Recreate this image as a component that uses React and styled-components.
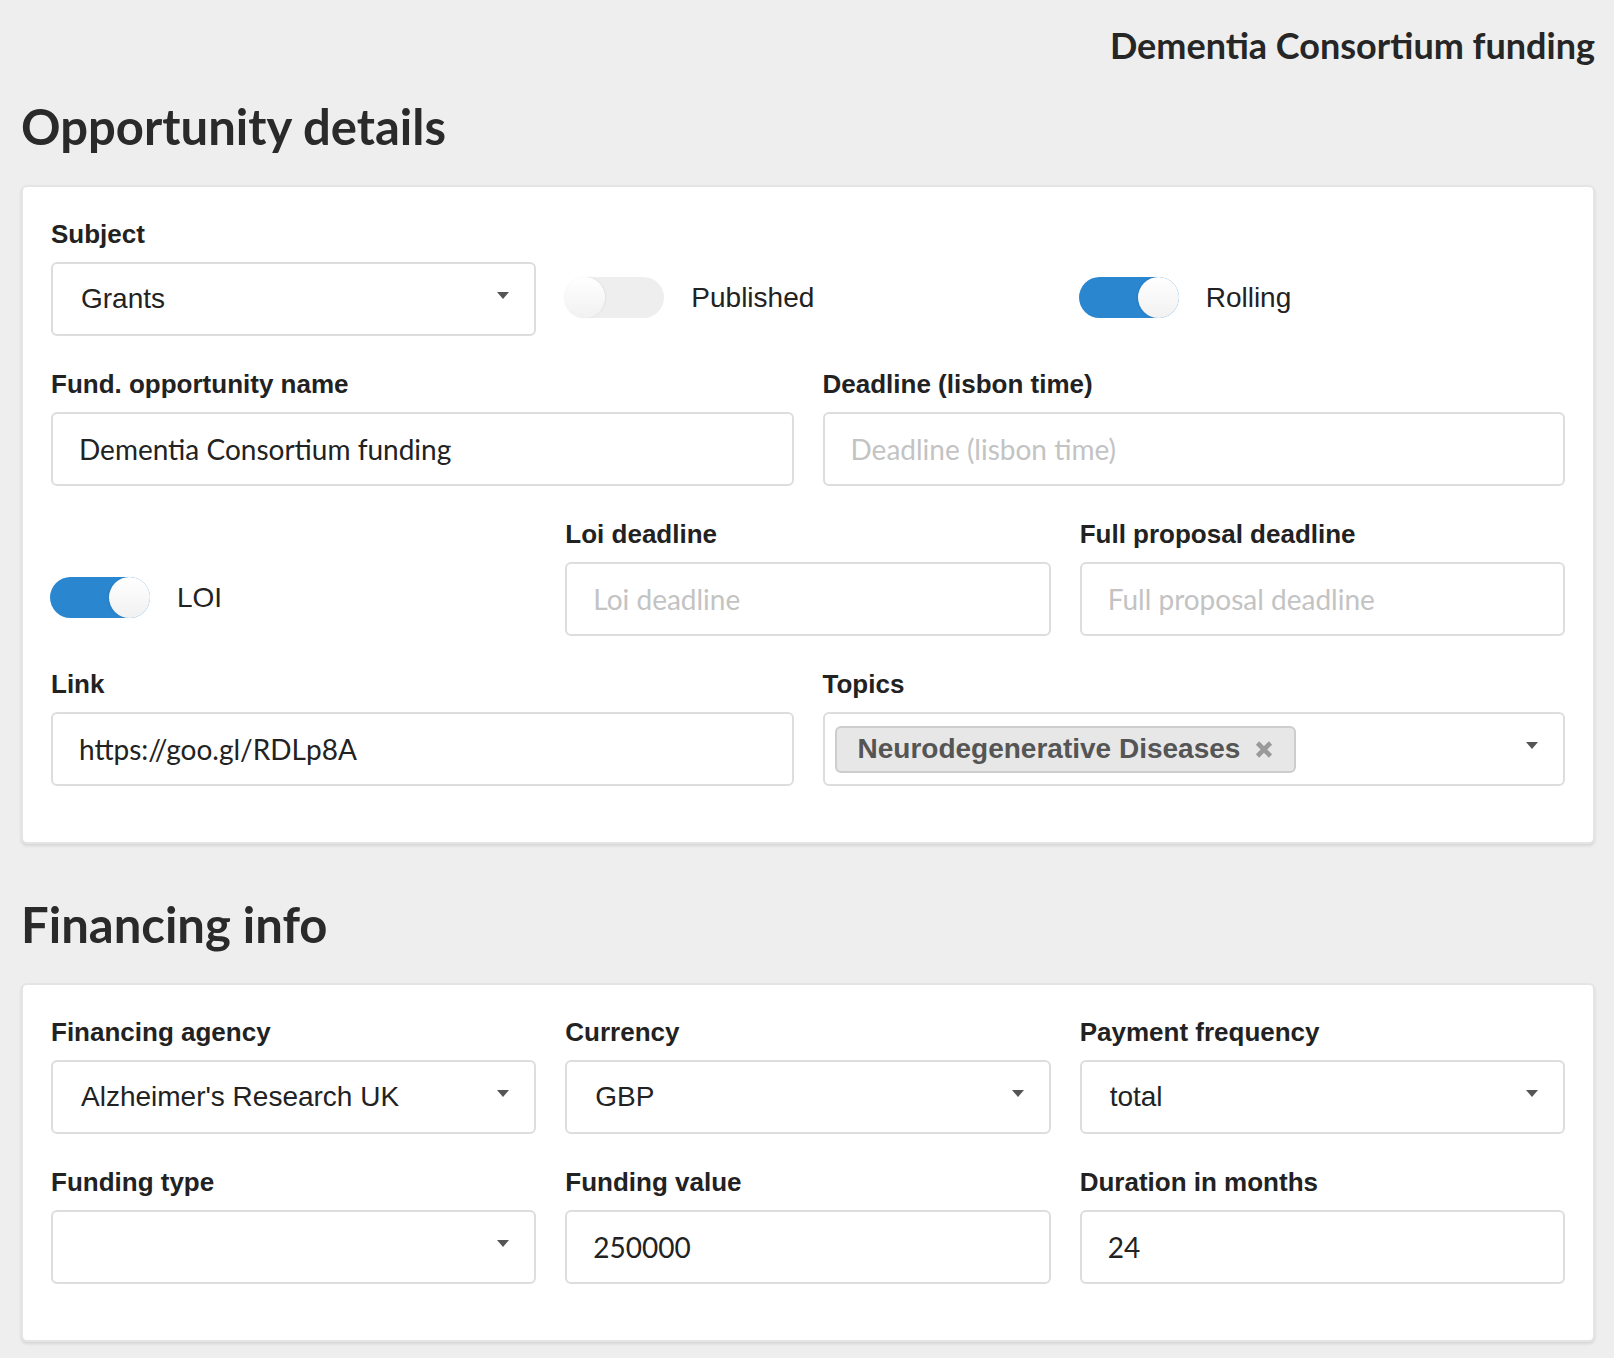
import React from "react";
import styled, { createGlobalStyle } from "styled-components";

const GlobalStyle = createGlobalStyle`
  * { box-sizing: border-box; }
  html, body { margin: 0; padding: 0; background: #eeeeee; }
  body { font-family: "Liberation Sans", Arial, sans-serif; color: #222; }
`;

const Page = styled.div`
  padding: 23px 19px 18px 21px;
`;

const TopTitle = styled.div`
  font-family: Lato, "Open Sans", sans-serif;
  font-weight: 700;
  font-size: 36px;
  line-height: 44px;
  text-align: right;
  color: #262626;
`;

const SectionTitle = styled.h2`
  margin: ${(p) => (p.$first ? "30px" : "51px")} 0 30px 0;
  font-family: Lato, "Open Sans", sans-serif;
  font-weight: 700;
  font-size: 49px;
  line-height: 58px;
  color: #2a2a2a;
`;

const Card = styled.section`
  background: #fff;
  border: 2px solid #e4e4e4;
  border-radius: 6px;
  box-shadow: 0 2px 3px rgba(0, 0, 0, 0.1);
  padding: 32px 28px 56px 28px;
`;

const Grid = styled.div`
  display: grid;
  grid-template-columns: repeat(6, minmax(0, 1fr));
  column-gap: 29px;
  row-gap: 33px;
`;

const Field = styled.div`
  grid-column: span ${(p) => p.$span};
  display: flex;
  flex-direction: column;
  min-width: 0;
`;

const Label = styled.label`
  font-family: "Liberation Sans", Arial, sans-serif;
  font-weight: 700;
  font-size: 26px;
  line-height: 30px;
  color: #222;
  margin-bottom: 13px;
`;

const TextInput = styled.input`
  height: 74px;
  width: 100%;
  border: 2px solid #dddddd;
  border-radius: 6px;
  padding: 0 26px;
  font-family: Lato, "Open Sans", sans-serif;
  font-size: 28px;
  color: #222;
  background: #fff;
  outline: none;
  &::placeholder {
    color: #c3c3c3;
  }
`;

const SelectBox = styled.div`
  height: 74px;
  border: 2px solid #dddddd;
  border-radius: 6px;
  background: #fff;
  display: flex;
  align-items: center;
  padding: 0 25px 0 ${(p) => (p.$tags ? "10px" : "28px")};
  font-family: "Liberation Sans", Arial, sans-serif;
  font-size: 28px;
  color: #222;
`;

const SelectValue = styled.span`
  flex: 1;
  min-width: 0;
  white-space: nowrap;
`;

const Caret = styled.span`
  flex: none;
  width: 0;
  height: 0;
  border-left: 6.5px solid transparent;
  border-right: 6.5px solid transparent;
  border-top: 7px solid #555;
  margin-top: -7px;
`;

const Chip = styled.span`
  display: inline-flex;
  align-items: center;
  gap: 15px;
  height: 47px;
  padding: 0 21px;
  border: 2px solid #cdcdcd;
  border-radius: 6px;
  background: #e7e7e7;
  font-family: "Liberation Sans", Arial, sans-serif;
  font-weight: 700;
  font-size: 28px;
  color: #555;
  margin-right: auto;
`;

const ToggleCell = styled.div`
  grid-column: span 2;
  display: flex;
  align-items: center;
  gap: 27px;
  margin-top: 43px;
  height: 71px;
  font-family: "Liberation Sans", Arial, sans-serif;
  font-size: 28px;
  color: #222;
`;

const Track = styled.span`
  position: relative;
  flex: none;
  width: 100px;
  height: 41px;
  border-radius: 21px;
  margin-left: -1px;
  background: ${(p) => (p.$on ? "#2a86cf" : "#eeeeee")};
`;

const Knob = styled.span`
  position: absolute;
  top: 0;
  left: ${(p) => (p.$on ? "59px" : "0")};
  width: 41px;
  height: 41px;
  border-radius: 50%;
  background: linear-gradient(180deg, #ffffff 0%, #f1f1f1 100%);
  box-shadow: ${(p) =>
    p.$on ? "-1px 0 2px rgba(0,0,0,0.08)" : "1px 0 2px rgba(0,0,0,0.06)"};
`;

const Toggle = ({ on, label }) => (
  <ToggleCell>
    <Track $on={on}>
      <Knob $on={on} />
    </Track>
    <span>{label}</span>
  </ToggleCell>
);

const RemoveIcon = () => (
  <svg width="18" height="17" viewBox="0 0 18 17" aria-hidden="true">
    <path d="M2.5 2 L15.5 15 M15.5 2 L2.5 15" stroke="#9a9a9a" strokeWidth="4.6" />
  </svg>
);

const SelectField = ({ span, label, value }) => (
  <Field $span={span}>
    <Label>{label}</Label>
    <SelectBox>
      <SelectValue>{value}</SelectValue>
      <Caret />
    </SelectBox>
  </Field>
);

const InputField = ({ span, label, value, placeholder }) => (
  <Field $span={span}>
    <Label>{label}</Label>
    <TextInput defaultValue={value} placeholder={placeholder} />
  </Field>
);

export default function App() {
  return (
    <>
      <GlobalStyle />
      <Page>
        <TopTitle>Dementia Consortium funding</TopTitle>
        <SectionTitle $first>Opportunity details</SectionTitle>
        <Card>
          <Grid>
            <SelectField span={2} label="Subject" value="Grants" />
            <Toggle on={false} label="Published" />
            <Toggle on label="Rolling" />

            <InputField span={3} label="Fund. opportunity name" value="Dementia Consortium funding" />
            <InputField span={3} label="Deadline (lisbon time)" placeholder="Deadline (lisbon time)" />

            <Toggle on label="LOI" />
            <InputField span={2} label="Loi deadline" placeholder="Loi deadline" />
            <InputField span={2} label="Full proposal deadline" placeholder="Full proposal deadline" />

            <InputField span={3} label="Link" value="https://goo.gl/RDLp8A" />
            <Field $span={3}>
              <Label>Topics</Label>
              <SelectBox $tags>
                <Chip>
                  Neurodegenerative Diseases
                  <RemoveIcon />
                </Chip>
                <Caret />
              </SelectBox>
            </Field>
          </Grid>
        </Card>

        <SectionTitle>Financing info</SectionTitle>
        <Card>
          <Grid>
            <SelectField span={2} label="Financing agency" value="Alzheimer's Research UK" />
            <SelectField span={2} label="Currency" value="GBP" />
            <SelectField span={2} label="Payment frequency" value="total" />

            <SelectField span={2} label="Funding type" value="" />
            <InputField span={2} label="Funding value" value="250000" />
            <InputField span={2} label="Duration in months" value="24" />
          </Grid>
        </Card>
      </Page>
    </>
  );
}
